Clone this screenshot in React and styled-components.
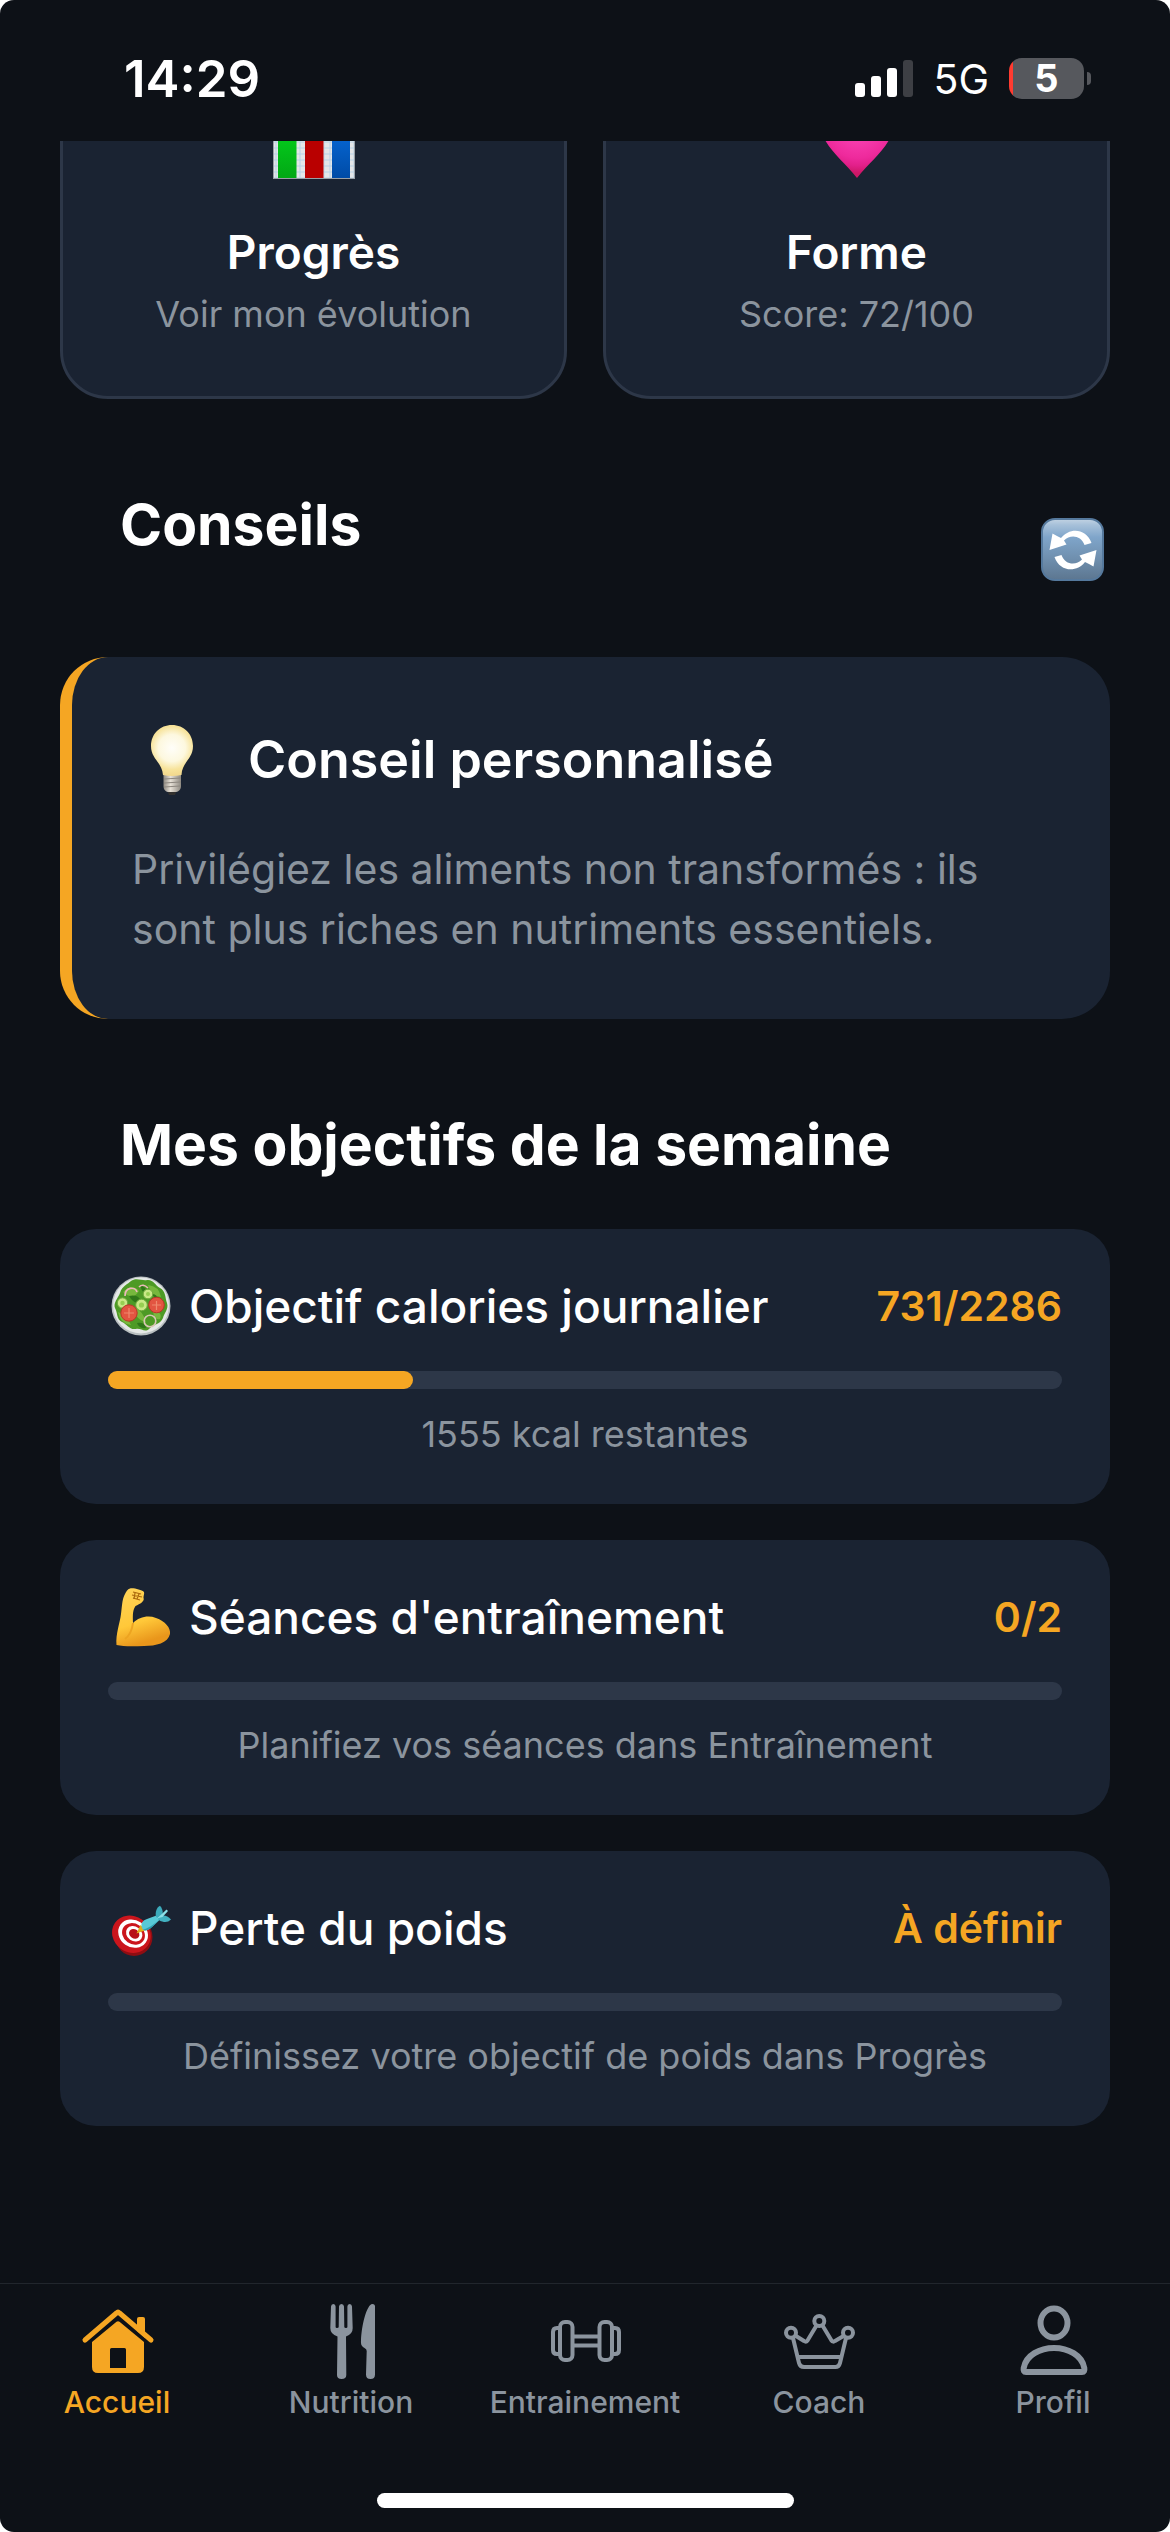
import React from "react";
import styled, { createGlobalStyle } from "styled-components";

const color = {
  bg: "#0d1117",
  card: "#1a2332",
  line: "#2d3748",
  hairline: "#21262d",
  text: "#ffffff",
  muted: "#8b949e",
  accent: "#f5a623",
};

const GlobalStyle = createGlobalStyle`
  *, *::before, *::after { box-sizing: border-box; }
  body {
    margin: 0;
    background: #ffffff;
    font-family: Inter, "Liberation Sans", sans-serif;
    color: ${color.text};
  }
  h1, h2, h3, p { margin: 0; }
  button { font: inherit; color: inherit; cursor: pointer; }
  svg { display: block; flex: none; }
`;

const Screen = styled.div`
  display: flex;
  flex-direction: column;
  min-height: 100vh;
  overflow: hidden;
  background: ${color.bg};
  border-radius: 14px;
`;

/* Status bar */
const StatusBar = styled.header`
  display: flex;
  align-items: center;
  justify-content: space-between;
  flex: none;
  height: 141px;
  padding: 16px 79px 0 124px;
`;

const Clock = styled.time`
  font-size: 51px;
  line-height: 60px;
  font-weight: 600;
`;

const StatusIcons = styled.div`
  display: flex;
  align-items: center;
  gap: 20px;
`;

const Network = styled.span`
  font-size: 41px;
  line-height: 48px;
`;

const Battery = styled.div`
  display: flex;
  align-items: center;
  gap: 3px;
`;

const BatteryCell = styled.div`
  width: 75px;
  height: 41px;
  border-radius: 13px;
  background: linear-gradient(to right, #ff3b30 4px, #56585d 4px);
  font-size: 38px;
  line-height: 41px;
  font-weight: 700;
  text-align: center;
`;

const BatteryCap = styled.div`
  width: 4px;
  height: 13px;
  border-radius: 0 4px 4px 0;
  background: #56585d;
`;

/* Scrolled content */
const Content = styled.main`
  flex: 1;
  overflow: hidden;
  padding: 0 60px 48px;
`;

const ShortcutGrid = styled.div`
  display: grid;
  grid-template-columns: 1fr 1fr;
  gap: 36px;
  margin-top: -95px;
`;

const Shortcut = styled.button`
  display: flex;
  flex-direction: column;
  align-items: center;
  padding: 48px 24px 60px;
  border: 3px solid ${color.line};
  border-radius: 48px;
  background: ${color.card};
`;

const ShortcutTitle = styled.span`
  margin-top: 44px;
  font-size: 46px;
  line-height: 58px;
  font-weight: 600;
`;

const Caption = styled.span`
  display: block;
  margin-top: ${(p) => p.$gap}px;
  font-size: 36px;
  line-height: 43px;
  text-align: center;
  color: ${color.muted};
`;

const SectionHeader = styled.div`
  display: flex;
  align-items: center;
  justify-content: space-between;
  margin-top: 90px;
  padding: 0 6px 0 60px;
`;

const SectionTitle = styled.h2`
  margin-bottom: 48px;
  font-size: 57px;
  line-height: 72px;
  font-weight: 700;
`;

const IconButton = styled.button`
  padding: 0;
  border: 0;
  background: none;
`;

const TipCard = styled.article`
  margin-top: 48px;
  padding: 60px;
  border-left: 12px solid ${color.accent};
  border-radius: 48px;
  background: ${color.card};
`;

const TipHeader = styled.div`
  display: flex;
  align-items: center;
  gap: 36px;
  height: 86px;
  margin-bottom: 36px;
`;

const TipTitle = styled.h3`
  font-size: 52px;
  line-height: 66px;
  font-weight: 600;
`;

const TipText = styled.p`
  font-size: 41px;
  line-height: 60px;
  color: ${color.muted};
`;

const GoalList = styled.div`
  display: grid;
  gap: 36px;
`;

const GoalCard = styled.article`
  padding: 48px;
  border-radius: 36px;
  background: ${color.card};
`;

const GoalHeader = styled.div`
  display: flex;
  align-items: center;
  gap: 18px;
  height: 58px;
  padding-left: 3px;
`;

const GoalTitle = styled.h3`
  flex: 1;
  font-size: 46px;
  line-height: 58px;
  font-weight: 500;
`;

const GoalValue = styled.span`
  font-size: 41px;
  line-height: 50px;
  font-weight: 600;
  color: ${color.accent};
`;

const Track = styled.div`
  height: 18px;
  margin-top: 36px;
  border-radius: 9px;
  background: ${color.line};
`;

const Fill = styled.div`
  height: 100%;
  border-radius: 9px;
  background: ${color.accent};
`;

/* Bottom navigation */
const BottomBar = styled.footer`
  display: flex;
  flex-direction: column;
  align-items: center;
  flex: none;
  padding: 18px 0 24px;
  border-top: 1px solid ${color.hairline};
`;

const Tabs = styled.nav`
  display: grid;
  grid-template-columns: repeat(5, 1fr);
  width: 100%;
`;

const Tab = styled.a`
  display: flex;
  flex-direction: column;
  align-items: center;
  gap: 2px;
  font-size: 30px;
  line-height: 36px;
  font-weight: 500;
  text-decoration: none;
  color: ${(p) => (p.$active ? color.accent : color.muted)};
`;

const HomeIndicator = styled.div`
  width: 417px;
  height: 15px;
  margin-top: 73px;
  border-radius: 8px;
  background: #ffffff;
`;

const SignalIcon = () => (
  <svg width="58" height="38" viewBox="0 0 58 38" fill="#fff" aria-hidden="true">
    <rect x="0" y="23" width="10" height="14" rx="3" />
    <rect x="16" y="16" width="10" height="21" rx="3" />
    <rect x="32" y="8" width="10" height="29" rx="3" />
    <rect x="48" y="0" width="10" height="37" rx="3" fill="#3d3f44" />
  </svg>
);

const ChartEmoji = () => (
  <svg width="82" height="82" viewBox="0 0 82 82" aria-hidden="true">
    <defs>
      <pattern id="grid" width="6" height="6" patternUnits="userSpaceOnUse">
        <rect width="6" height="6" fill="#e4e6e8" />
        <path d="M0 3H6M3 0V6" stroke="#b9d3e6" strokeWidth="1" />
      </pattern>
      <linearGradient id="green" x2="0" y2="1"><stop stopColor="#04d61e" /><stop offset="1" stopColor="#02a815" /></linearGradient>
      <linearGradient id="blue" x2="0" y2="1"><stop stopColor="#0668d6" /><stop offset="1" stopColor="#004ba6" /></linearGradient>
    </defs>
    <rect width="82" height="82" fill="#9aa0a6" />
    <rect x="1" y="1" width="80" height="80" fill="url(#grid)" />
    <rect x="5" y="24" width="18.5" height="57" fill="url(#green)" />
    <rect x="32" y="8" width="18.5" height="73" fill="#b90000" />
    <rect x="59" y="34" width="18" height="47" fill="url(#blue)" />
  </svg>
);

const HeartEmoji = () => (
  <svg width="82" height="82" viewBox="0 0 82 82" aria-hidden="true">
    <defs>
      <radialGradient id="pink" gradientUnits="userSpaceOnUse" cx="42" cy="26" r="50">
        <stop stopColor="#ff4fc0" />
        <stop offset="0.7" stopColor="#ee2a9c" />
        <stop offset="0.85" stopColor="#e2208a" />
        <stop offset="1" stopColor="#cd1767" />
      </radialGradient>
    </defs>
    <path d="M41 81C30 67 17 57 9 43C-3 22 8 5 22 5C32 5 38 11 41 18C44 11 50 5 60 5C74 5 85 22 73 43C65 57 52 67 41 81Z" fill="url(#pink)" />
  </svg>
);

const RefreshEmoji = () => (
  <svg width="63" height="63" viewBox="0 0 63 63" aria-hidden="true">
    <defs>
      <linearGradient id="tile" x2="0" y2="1">
        <stop stopColor="#c2d3e3" />
        <stop offset="0.1" stopColor="#a6c0d9" />
        <stop offset="0.3" stopColor="#7fa5ca" />
        <stop offset="0.65" stopColor="#6f8fae" />
        <stop offset="1" stopColor="#5c7690" />
      </linearGradient>
    </defs>
    <rect x="1" y="1" width="61" height="61" rx="13" fill="url(#tile)" stroke="#55799d" strokeWidth="2" />
    <g fill="#fff">
      <path d="M20 20C28 9.500 45 9.500 50.500 25L43.500 27C40 17 29 16 23 22.500L25.500 26.500L8.500 32L11.500 15.500L16 18Z" />
      <path d="M20 20C28 9.500 45 9.500 50.500 25L43.500 27C40 17 29 16 23 22.500L25.500 26.500L8.500 32L11.500 15.500L16 18Z" transform="rotate(180 32 32)" />
    </g>
  </svg>
);

const BulbEmoji = () => (
  <svg width="80" height="72" viewBox="0 0 80 72" aria-hidden="true">
    <defs>
      <radialGradient id="glass" gradientUnits="userSpaceOnUse" cx="40" cy="24" r="30">
        <stop stopColor="#fffef9" />
        <stop offset="0.45" stopColor="#fdf8df" />
        <stop offset="0.72" stopColor="#f7e39b" />
        <stop offset="1" stopColor="#f0d488" />
      </radialGradient>
      <linearGradient id="screw" x2="1" y2="0"><stop stopColor="#8f8a82" /><stop offset="0.4" stopColor="#e6e0d6" /><stop offset="1" stopColor="#8f8a82" /></linearGradient>
    </defs>
    <path d="M35 66H45L43 71H37Z" fill="#33312f" />
    <path d="M31.500 50H49V62C49 66 46 68 43 68H37C34 68 31.500 66 31.500 62Z" fill="url(#screw)" />
    <path d="M32 55L49 54M32 59L49 58M32 63L48 62" stroke="#8d877f" strokeWidth="1" />
    <path d="M40 1C28 1 19 10 19 22C19 35 30 38 31 51Q40 53 49.500 51C50 38 61 35 61 22C61 10 52 1 40 1Z" fill="url(#glass)" />
  </svg>
);

const SaladEmoji = () => (
  <svg width="60" height="60" viewBox="0 0 60 60" aria-hidden="true">
    <circle cx="30" cy="30" r="29.500" fill="#b9bfc1" />
    <circle cx="30" cy="29.500" r="28" fill="#e5e8e7" />
    <path d="M9 17C11 10 17 8 20 5C25 1 31 5 36 4C42 3 44 9 49 12C55 15 54 22 56 27C58 33 53 37 52 42C49 49 42 48 38 53C34 57 30 52 25 53C18 54 16 48 11 46C5 43 7 37 4 32C2 27 7 22 9 17Z" fill="#4d9a25" />
    <path d="M12 16Q21 7 28 15Q22 25 12 16ZM37 9Q48 10 50 21Q40 20 37 9ZM22 30Q32 35 35 46Q24 44 22 30ZM7 36Q16 39 20 49Q9 48 7 36ZM42 35Q52 36 49 43Q43 45 42 35Z" fill="#77b83d" />
    <path d="M18 20Q27 18 30 25Q24 30 18 20ZM30 9Q36 12 36 17Q29 16 30 9ZM26 47Q34 46 35 52Q28 53 26 47ZM40 18Q46 17 47 24" fill="#2f7719" />
    <g fill="#c9e987" stroke="#6da83b">
      <circle cx="11.500" cy="27" r="5.200" /><circle cx="30.500" cy="29" r="5.800" /><circle cx="37" cy="18" r="4.800" />
    </g>
    <g fill="#96cf52"><circle cx="11.500" cy="27" r="2.200" /><circle cx="30.500" cy="29" r="2.600" /><circle cx="37" cy="18" r="2" /></g>
    <g fill="#e25541" stroke="#b93628"><circle cx="18" cy="37" r="8.200" /><circle cx="45.500" cy="29" r="7.800" /></g>
    <path d="M18 32V42M13 37H23M45.500 25V34M41 29H50" stroke="#ee8a6e" strokeWidth="1.200" />
    <g fill="none" strokeWidth="1.600"><path d="M14 20C14 11 24 10 26 16M28 11Q32 7 37 12" stroke="#edb9bc" /><circle cx="39" cy="45" r="5.800" stroke="#d9c6b4" /></g>
  </svg>
);

const BicepsEmoji = () => (
  <svg width="60" height="60" viewBox="0 0 60 60" aria-hidden="true">
    <defs>
      <linearGradient id="skin" x2="0.300" y2="1"><stop stopColor="#ffd45a" /><stop offset="0.650" stopColor="#ffc839" /><stop offset="1" stopColor="#e9961b" /></linearGradient>
    </defs>
    <path d="M19 1.500C22 .5 31 3 32.500 4.500C34 6 32.500 8 32.500 11C34 14 29 17 24.500 19C21 24 22 31 22 36C28 30 37 28 45 31C54 34 60 41 59 47C57 56 45 59 33 59C21 59.500 12 59.500 5.500 58C4.500 47 9 36 10 27C11 20 11 13 13.500 8C15 5 16.500 2 19 1.500Z" fill="url(#skin)" />
    <path d="M22 36C21 44 18 49 14 52" fill="none" stroke="#eda421" strokeWidth="2" />
    <path d="M22 5L30 7M21 8L31 10M22 11L29 13M24 6L23 12M28 7L26 12" fill="none" stroke="#a9670d" strokeWidth="1.200" />
  </svg>
);

const TargetEmoji = () => (
  <svg width="60" height="60" viewBox="0 0 60 60" aria-hidden="true">
    <ellipse cx="23" cy="39" rx="18.500" ry="19" fill="#8f0d12" />
    <g transform="rotate(35 20 36)">
      <ellipse cx="20.500" cy="36" rx="20" ry="18" fill="#cb151c" />
      <ellipse cx="21.500" cy="34.500" rx="15.500" ry="13.500" fill="#fff" />
      <ellipse cx="22" cy="34.500" rx="12" ry="10.200" fill="#cb151c" />
      <ellipse cx="22.500" cy="34" rx="8.700" ry="7.200" fill="#fff" />
      <ellipse cx="22.500" cy="34" rx="5.500" ry="4.500" fill="#b81118" />
    </g>
    <path d="M25.500 35.500L29.500 27L35 32Z" fill="#e0ae1c" />
    <path d="M30.500 28C30 24 33 22 36 21L45.500 17.500L49 21.500L41 29C38 32 34 33.500 31.500 31Z" fill="#58c9d6" />
    <path d="M32 31.500C36 31 42 27 49 21.500L41 29C38 32 34 33.500 32 31.500Z" fill="#2f9db0" />
    <path d="M45 19C44 14 45.500 9.500 49 7.700C51 10 52 13 51.700 15.500L48 20.500Z" fill="#3caabb" />
    <path d="M46.500 21L51.500 17.500Q56 17 60 21.500Q57 24.500 53 24Q49 23.500 46.500 21Z" fill="#42b1c1" />
    <path d="M46 20.500L55.500 11.500L57 13L51.500 19Z" fill="#8be0e8" />
  </svg>
);

const HomeIcon = () => (
  <svg width="80" height="80" viewBox="0 0 80 80" fill="currentColor" aria-hidden="true">
    <path d="M60 29V17Q60 15 62 15H66Q68 15 68 17V36Z" />
    <path d="M8 38L39.500 11Q41 9.500 42.500 11L74 38" fill="none" stroke="currentColor" strokeWidth="5" strokeLinecap="round" strokeLinejoin="round" />
    <path fillRule="evenodd" d="M39.500 19.800Q41 18.500 42.500 19.800L67 40V65Q67 71 61 71H21Q15 71 15 65V40ZM34.500 46Q33 46 33 47.500V66H49V47.500Q49 46 47.500 46Z" />
  </svg>
);

const CutleryIcon = () => (
  <svg width="80" height="80" viewBox="0 0 80 80" fill="currentColor" aria-hidden="true">
    <path d="M20 4.500Q20.200 2 22.300 2Q24.600 2 24.600 4.500V25Q24.600 26 26 26Q27.600 26 27.700 25L28 4.500Q28.200 2 30.500 2Q32.800 2 33 4.500L33.300 25Q33.400 26 35 26Q36.400 26 36.400 25V4.500Q36.400 2 38.700 2Q40.800 2 41 4.500L41.700 26Q41.800 32 35 34.500L35.300 73Q35.300 77 30.600 77Q26 77 26 73L26.500 34.500Q19.200 32 19.300 26Z" />
    <path d="M61.500 2Q64 2 64 4.500V72.500Q64 77 59.500 77Q55 77 55 72.500L55.700 49Q55.700 47 53.500 46Q50 44 50 41C50 26 54.500 8 59 3.200Q60.200 2 61.500 2Z" />
  </svg>
);

const DumbbellIcon = () => (
  <svg width="80" height="80" viewBox="0 0 80 80" fill="none" stroke="currentColor" strokeWidth="4" aria-hidden="true">
    <path d="M14 26H12Q8 26 8 30V48Q8 52 12 52H14M68 26H70Q74 26 74 30V48Q74 52 70 52H68M28 34.500H54M28 43.500H54" />
    <rect x="15" y="20" width="12.500" height="38" rx="5" />
    <rect x="54.500" y="20" width="12.500" height="38" rx="5" />
  </svg>
);

const CrownIcon = () => (
  <svg width="80" height="80" viewBox="0 0 80 80" fill="none" stroke="currentColor" strokeWidth="4" strokeLinejoin="round" aria-hidden="true">
    <circle cx="12" cy="30.700" r="5" />
    <circle cx="40.300" cy="19" r="5" />
    <circle cx="69" cy="30.700" r="5" />
    <path d="M14 36L20 61Q21 65 25 65H56.500Q60 65 61 61L67 36M17 34L25 39Q27 40.500 28.500 38.500L37.500 23.500M43.500 23.500L52.500 38.500Q54 40.500 56 39L64.500 34M19.500 55H62" />
  </svg>
);

const PersonIcon = () => (
  <svg width="80" height="80" viewBox="0 0 80 80" fill="none" stroke="currentColor" strokeWidth="6" aria-hidden="true">
    <ellipse cx="41" cy="21" rx="13.500" ry="14.500" />
    <path d="M13 70Q10 70 10.700 66C13 53 27 46 41 46C55 46 69 53 71.300 66Q72 70 69 70Z" />
  </svg>
);

const shortcuts = [
  { title: "Progrès", note: "Voir mon évolution", Icon: ChartEmoji },
  { title: "Forme", note: "Score: 72/100", Icon: HeartEmoji },
];

const goals = [
  { title: "Objectif calories journalier", value: "731/2286", done: 731 / 2286, note: "1555 kcal restantes", Icon: SaladEmoji },
  { title: "Séances d'entraînement", value: "0/2", done: 0, note: "Planifiez vos séances dans Entraînement", Icon: BicepsEmoji },
  { title: "Perte du poids", value: "À définir", done: 0, note: "Définissez votre objectif de poids dans Progrès", Icon: TargetEmoji },
];

const tabs = [
  { label: "Accueil", href: "#accueil", Icon: HomeIcon, active: true },
  { label: "Nutrition", href: "#nutrition", Icon: CutleryIcon },
  { label: "Entrainement", href: "#entrainement", Icon: DumbbellIcon },
  { label: "Coach", href: "#coach", Icon: CrownIcon },
  { label: "Profil", href: "#profil", Icon: PersonIcon },
];

export default function App() {
  return (
    <>
      <GlobalStyle />
      <Screen>
        <StatusBar>
          <Clock>14:29</Clock>
          <StatusIcons>
            <SignalIcon />
            <Network>5G</Network>
            <Battery>
              <BatteryCell>5</BatteryCell>
              <BatteryCap />
            </Battery>
          </StatusIcons>
        </StatusBar>

        <Content>
          <ShortcutGrid>
            {shortcuts.map(({ title, note, Icon }) => (
              <Shortcut key={title} type="button">
                <Icon />
                <ShortcutTitle>{title}</ShortcutTitle>
                <Caption $gap={12}>{note}</Caption>
              </Shortcut>
            ))}
          </ShortcutGrid>

          <SectionHeader>
            <SectionTitle>Conseils</SectionTitle>
            <IconButton type="button" aria-label="Actualiser les conseils">
              <RefreshEmoji />
            </IconButton>
          </SectionHeader>

          <TipCard>
            <TipHeader>
              <BulbEmoji />
              <TipTitle>Conseil personnalisé</TipTitle>
            </TipHeader>
            <TipText>
              Privilégiez les aliments non transformés : ils sont plus riches en nutriments essentiels.
            </TipText>
          </TipCard>

          <SectionHeader>
            <SectionTitle>Mes objectifs de la semaine</SectionTitle>
          </SectionHeader>

          <GoalList>
            {goals.map(({ title, value, done, note, Icon }) => (
              <GoalCard key={title}>
                <GoalHeader>
                  <Icon />
                  <GoalTitle>{title}</GoalTitle>
                  <GoalValue>{value}</GoalValue>
                </GoalHeader>
                <Track role="progressbar" aria-label={title} aria-valuenow={Math.round(done * 100)} aria-valuemin={0} aria-valuemax={100}>
                  <Fill style={{ width: `${done * 100}%` }} />
                </Track>
                <Caption $gap={24}>{note}</Caption>
              </GoalCard>
            ))}
          </GoalList>
        </Content>

        <BottomBar>
          <Tabs>
            {tabs.map(({ label, href, Icon, active }) => (
              <Tab key={label} href={href} $active={active} aria-current={active ? "page" : undefined}>
                <Icon />
                {label}
              </Tab>
            ))}
          </Tabs>
          <HomeIndicator />
        </BottomBar>
      </Screen>
    </>
  );
}
